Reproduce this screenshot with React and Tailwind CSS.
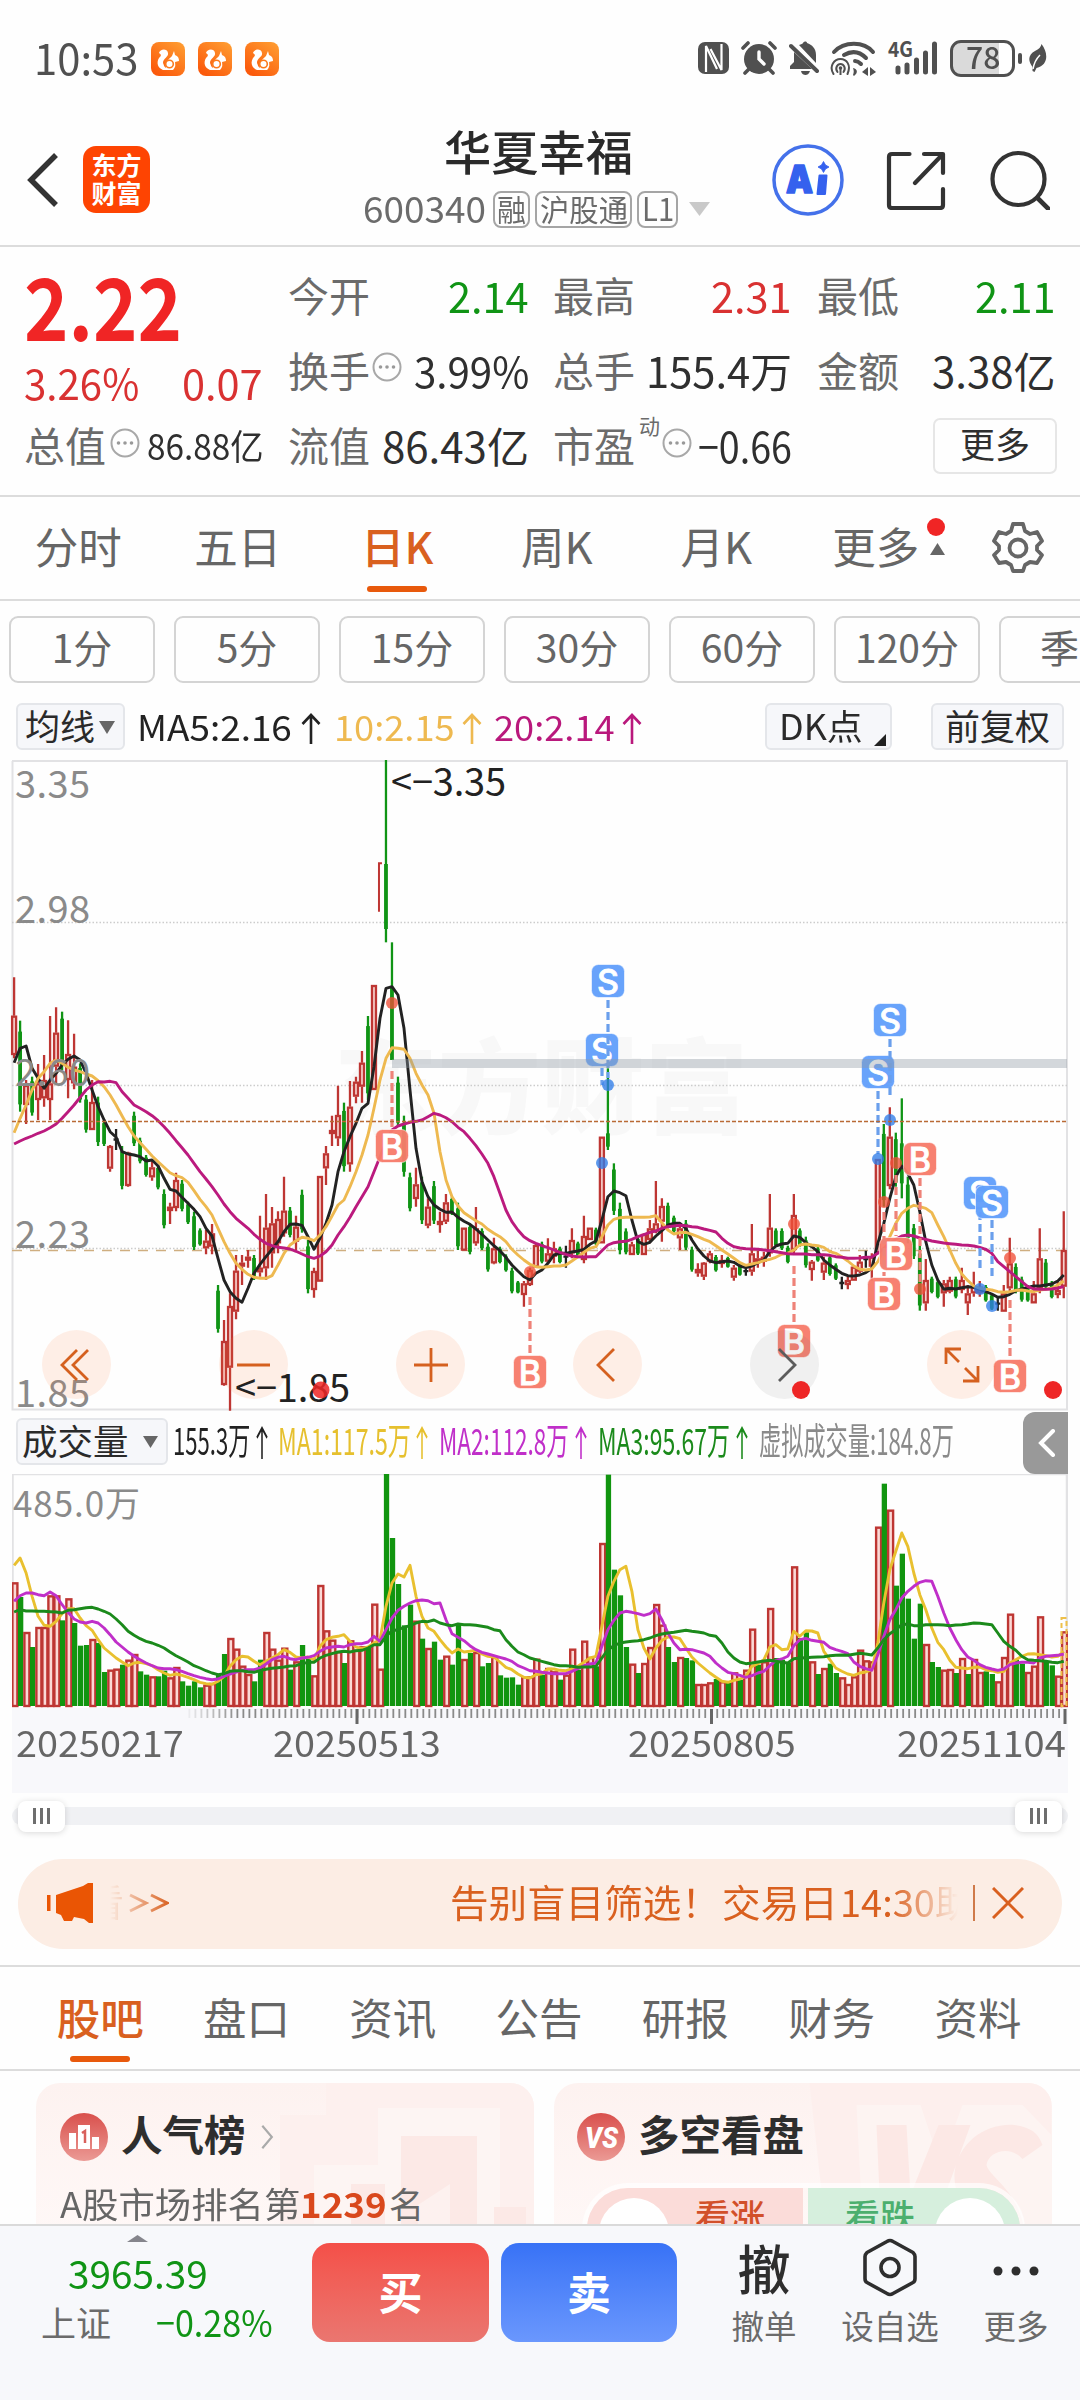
import React, { useLayoutEffect, useRef } from "react";

/* ---------- shared pieces ---------- */

// Text squeezed or stretched horizontally to fill the width set by its class.
function Fit({ className = "", children }) {
  const outer = useRef(null);
  const inner = useRef(null);
  useLayoutEffect(() => {
    inner.current.style.transform = `scaleX(${outer.current.offsetWidth / inner.current.offsetWidth})`;
  }, []);
  return (
    <span ref={outer} className={"inline-block shrink-0 whitespace-nowrap leading-none " + className}>
      <span ref={inner} className="inline-block origin-left">{children}</span>
    </span>
  );
}

const Up = ({ className = "" }) => (
  <svg viewBox="0 0 20 32" preserveAspectRatio="none" className={"shrink-0 " + className} fill="none" stroke="currentColor" strokeWidth="2.6">
    <path d="M10 31V2M1.5 11L10 2l8.5 9" />
  </svg>
);

const Down = ({ className = "" }) => (
  <svg viewBox="0 0 20 14" preserveAspectRatio="none" className={"shrink-0 " + className} fill="currentColor"><path d="M0 0h20L10 14z" /></svg>
);

const Dots = ({ className = "" }) => (
  <svg viewBox="0 0 30 30" className={"h-[30px] w-[30px] shrink-0 " + className}>
    <circle cx="15" cy="15" r="13.5" fill="none" stroke="#a8a8a8" strokeWidth="2" />
    <circle cx="8.5" cy="15" r="1.8" fill="#999" /><circle cx="15" cy="15" r="1.8" fill="#999" /><circle cx="21.5" cy="15" r="1.8" fill="#999" />
  </svg>
);

/* ---------- status bar ---------- */

const Squirrel = () => (
  <svg viewBox="0 0 34 34" className="h-[34px] w-[34px]">
    <defs><linearGradient id="sq" x1="1" y1="0" x2="0.3" y2="1"><stop offset="0" stopColor="#ffa033" /><stop offset="1" stopColor="#fb5a0c" /></linearGradient></defs>
    <rect width="34" height="34" rx="8" fill="url(#sq)" />
    <path d="M8 11c1-4 8-5 9 0 1 4-5 5-5 10 1 2 1 4 3 5-1-6 3-9 6-12l2-5 1 4c3 1 4 3 4 6l-4 1c1 3 0 6-2 8H12c-5-2-7-7-4-12 2-2 3-3 0-5z" fill="#fff" />
    <circle cx="18.500" cy="22" r="3.800" fill="#fff" stroke="#fb7a1c" strokeWidth="1.600" />
    <path d="M24.500 22h3M24.500 26h2" stroke="#fb7a1c" strokeWidth="1.500" />
  </svg>
);

function StatusBar() {
  return (
    <div className="flex h-[118px] items-center pl-[34px] text-[#505050]">
      <Fit className="w-[104px] text-[43px] -mt-[5px]">10:53</Fit>
      <div className="ml-[13px] flex gap-[13px]"><Squirrel /><Squirrel /><Squirrel /></div>
      <div className="ml-[419px] flex items-center -mt-[2px]">
        <svg viewBox="0 0 31 32" className="h-[32px] w-[31px]">
          <rect width="31" height="32" rx="7" fill="#505050" />
          <path d="M8 30V4l11 23M23.500 2v26L12.500 7" fill="none" stroke="#fff" strokeWidth="2.200" strokeLinejoin="bevel" />
        </svg>
        <svg viewBox="0 0 36 34" className="ml-[12px] h-[34px] w-[36px]" fill="none" stroke="#505050" strokeWidth="3.600" strokeLinecap="round">
          <circle cx="18" cy="18" r="15" fill="#505050" stroke="none" />
          <path d="M2 7l5-5M34 7l-5-5M8 28l-4 4M28 28l4 4" />
          <path d="M18 11v7l5 5" stroke="#fff" strokeWidth="3.400" />
        </svg>
        <svg viewBox="0 0 30 34" className="ml-[12px] h-[34px] w-[30px]" fill="#505050">
          <path d="M10 4c2-1 4-1 4-2 1-2 4-2 4 0 5 2 9 5 9 12v8zM5 11l18 17H1v-3l4-4zM12 30h9c-1 3-3 4-4.500 4s-4-1-4.500-4z" />
          <path d="M2 5l26 25" strokeWidth="4" stroke="#505050" strokeLinecap="round" />
        </svg>
        <svg viewBox="0 0 46 35" className="ml-[11px] h-[35px] w-[46px]" fill="none" stroke="#505050" strokeWidth="4" strokeLinecap="round">
          <path d="M4 11C14 0 34 0 43 11" /><path d="M14 14c7-4 15-4 22 3" /><path d="M25 20c3 0 4 1 6 3" />
          <path d="M3.500 33c-5-8 1-15 7-15s11 6 7 15" strokeWidth="2" /><path d="M7.500 31c-3-4 0-8 3-8s6 4 3 8" strokeWidth="2" />
          <circle cx="10.500" cy="27" r="1.800" fill="#505050" stroke="none" /><path d="M9.500 28h2v6h-2z" fill="#505050" stroke="none" />
          <path d="M23 27c5 1 5 5 1 8l-1-1c1-3 1-4 0-7zM32 31l6-5v9zM40 26v9l6-4z" fill="#505050" stroke="none" />
        </svg>
        <svg viewBox="0 0 52 36" className="ml-[11px] h-[36px] w-[52px]" fill="none" stroke="#505050" strokeWidth="5" strokeLinecap="round">
          <text x="1" y="17" fontSize="21" fontWeight="700" fill="#505050" stroke="none" textLength="25" lengthAdjust="spacingAndGlyphs">4G</text>
          <path d="M11 28v4M20 25v7M29.500 20v12M38.500 13v19M47.500 4v28" />
        </svg>
        <div className="ml-[11px] flex h-[37px] w-[65px] items-center justify-center rounded-[11px] border-[3px] border-[#505050] bg-[linear-gradient(90deg,#dadada_78%,#fff_78%)]">
          <Fit className="w-[34px] text-[31px] font-medium -mt-[5px]">78</Fit>
        </div>
        <div className="ml-[3px] h-[11px] w-[4px] rounded bg-[#505050]" />
        <svg viewBox="0 0 18 28" className="ml-[7px] h-[28px] w-[18px]" fill="#505050"><path d="M12.500 0c7 9 7 21-5 24l-2 4-2-1v-4C-2 16 0 10 6 7c4-2 6-4 6.500-7z" /><path d="M4 25C5 19 7 15 11 11" stroke="#fff" strokeWidth="1.500" fill="none" /></svg>
      </div>
    </div>
  );
}

/* ---------- header ---------- */

function Header() {
  return (
    <header className="flex h-[129px] items-center border-b-2 border-[#dcdcdc] pb-[4px] text-[#333]">
      <svg viewBox="0 0 32 54" className="ml-[27px] h-[54px] w-[32px]" fill="none" stroke="#333" strokeWidth="5.500"><path d="M29 2L4 27l25 25" /></svg>
      <div className="ml-[24px] flex h-[67px] w-[67px] flex-col items-center justify-center gap-[3px] rounded-[13px] bg-[#fe4402] pb-[3px] text-[25px] font-bold leading-none text-white">
        <span>东方</span><span>财富</span>
      </div>
      <div className="ml-[212px] flex w-[350px] flex-col">
        <div className="-mt-[6px] pl-[82px]"><Fit className="w-[189px] text-[47px] font-medium text-[#2a2a2a]">华夏幸福</Fit></div>
        <div className="mt-[16px] flex items-center text-[#6b6b6b]">
          <Fit className="w-[123px] text-[36px] ml-[1px] -mt-[5px]">600340</Fit>
          <span className="ml-[7px] flex h-[37px] w-[37px] items-center justify-center rounded-[8px] border-2 border-[#a5a5a5]"><Fit className="w-[29px] text-[30px] -mt-[3px]">融</Fit></span>
          <span className="ml-[5px] flex h-[37px] w-[97px] items-center justify-center rounded-[8px] border-2 border-[#a5a5a5]"><Fit className="w-[88px] text-[30px] -mt-[3px]">沪股通</Fit></span>
          <span className="ml-[5px] flex h-[37px] w-[41px] items-center justify-center rounded-[8px] border-2 border-[#a5a5a5]"><Fit className="w-[32px] text-[32px] -mt-[4px]">L1</Fit></span>
          <Down className="ml-[11px] h-[14px] w-[21px] text-[#c9c9c9]" />
        </div>
      </div>
      <svg viewBox="0 0 72 72" className="ml-[60px] h-[72px] w-[72px]">
        <circle cx="36" cy="36" r="34" fill="#fff" stroke="#4471ea" strokeWidth="3.500" />
        <g fill="#3561ee" stroke="#3561ee" strokeLinejoin="round">
          <text x="14" y="49" fontFamily="Inter, sans-serif" fontWeight="900" fontSize="38" strokeWidth="1.600" textLength="27" lengthAdjust="spacingAndGlyphs">A</text>
          <path d="M47.500 31.500h7l-1.500 18.500h-7.500z" strokeWidth="2" />
          <path d="M51.500 17.500l2 3.500 3.500 2-3.500 2-2 3.500-2-3.500-3.500-2 3.500-2z" strokeWidth="0.800" />
        </g>
      </svg>
      <svg viewBox="0 0 60 60" className="ml-[42px] h-[60px] w-[60px]" fill="none" stroke="#333" strokeWidth="4.200" strokeLinecap="round" strokeLinejoin="round">
        <path d="M23.500 4H6c-2 0-3 1-3 3v48c0 2 1 3 3 3h48c2 0 3-1 3-3V39M38 4h19v19M56 5L29 33" />
      </svg>
      <svg viewBox="0 0 60 60" className="ml-[44px] h-[60px] w-[60px]" fill="none" stroke="#333" strokeWidth="4.200" strokeLinecap="round"><circle cx="28.500" cy="29" r="26" /><path d="M47.500 48L58 58.500" strokeWidth="4.600" /></svg>
    </header>
  );
}

/* ---------- quote ---------- */

const Label = ({ children }) => <span className="text-[41px] text-[#6b6b6b]">{children}</span>;

function Quote() {
  const cell = "flex h-[75px] items-center justify-between leading-none";
  return (
    <section className="flex h-[250px] border-b-2 border-[#dcdcdc] pt-[10px] text-[42px] leading-none text-[#2f2f2f]">
      <div className="ml-[24px] w-[239px]">
        <div className="h-[92px] pt-[4px]"><Fit className="w-[158px] text-[86px] font-bold text-[#f02525]">2.22</Fit></div>
        <div className="flex h-[58px] items-center justify-between pt-[8px] text-[#d93131]">
          <Fit className="w-[115px]">3.26%</Fit><Fit className="w-[81px]">0.07</Fit>
        </div>
        <div className={cell}><Label>总值</Label><Dots className="-ml-[3px] -mt-[4px]" /><Fit className="w-[116px] text-[35px]">86.88亿</Fit></div>
      </div>
      <div className="ml-[25px] w-[241px]">
        <div className={cell}><Label>今开</Label><Fit className="w-[81px] text-[#109415]">2.14</Fit></div>
        <div className={cell}><Label>换手</Label><Dots className="-ml-[10px] -mt-[6px]" /><Fit className="w-[115px]">3.99%</Fit></div>
        <div className={cell}><Label>流值</Label><Fit className="w-[147px]">86.43亿</Fit></div>
      </div>
      <div className="ml-[24px] w-[239px]">
        <div className={cell}><Label>最高</Label><Fit className="w-[81px] text-[#d93131]">2.31</Fit></div>
        <div className={cell}><Label>总手</Label><Fit className="w-[146px]">155.4万</Fit></div>
        <div className={cell}>
          <Label>市盈</Label><span className="mb-[38px] -ml-[2px] text-[21px] text-[#6b6b6b]">动</span><Dots className="-ml-[4px] -mt-[4px]" />
          <Fit className="w-[94px]">−0.66</Fit>
        </div>
      </div>
      <div className="ml-[25px] w-[239px]">
        <div className={cell}><Label>最低</Label><Fit className="w-[81px] text-[#109415]">2.11</Fit></div>
        <div className={cell}><Label>金额</Label><Fit className="w-[124px]">3.38亿</Fit></div>
        <div className={cell + " !justify-end"}>
          <div className="-mr-[1px] mt-[2px] flex h-[56px] w-[124px] items-center justify-center rounded-[7px] border-2 border-[#e6e6e6] pb-[6px] text-[35px]">更多</div>
        </div>
      </div>
    </section>
  );
}

/* ---------- period tabs ---------- */

function Periods() {
  const tabs = ["分时", "五日", "日K", "周K", "月K", "更多"];
  return (
    <nav className="flex h-[104px] border-b-2 border-[#dcdcdc] text-[43.500px] leading-none text-[#666]">
      {tabs.map((t) => (
        <div key={t} className={"relative flex w-[159.500px] items-center justify-center pb-[5px] pr-[3px] " + (t === "日K" ? "font-medium text-[#d9601f]" : "")}>
          <span>{t}</span>
          {t === "日K" && <i className="absolute bottom-[7px] h-[6px] w-[60px] rounded-full bg-[#e8590c]" />}
          {t === "更多" && (
            <>
              <i className="absolute left-[129px] top-[21px] h-[18px] w-[18px] rounded-full bg-[#f02525]" />
              <Down className="absolute left-[132px] top-[46px] h-[12px] w-[15px] rotate-180 text-[#666]" />
            </>
          )}
        </div>
      ))}
      <svg viewBox="0 0 52 54" className="ml-[34px] mt-[24px] h-[54px] w-[54px]" fill="none" stroke="#666" strokeWidth="3.800" strokeLinejoin="round">
        <path d="M21 3h10l2 7 5 3 7-2 5 9-5 5v4l5 5-5 8-7-1-5 3-2 6H21l-2-6-5-3-7 1-5-8 5-5v-4l-5-5 5-9 7 2 5-3z" />
        <circle cx="26" cy="27" r="8.500" />
      </svg>
    </nav>
  );
}

function Chips() {
  return (
    <div className="flex h-[98px] gap-[19px] overflow-hidden pl-[9px] pt-[15px]">
      {["1分", "5分", "15分", "30分", "60分", "120分", "季K"].map((t) => (
        <div key={t} className="flex h-[67px] w-[146px] shrink-0 items-center justify-center rounded-[9px] border-2 border-[#d4d4d4] pb-[6px] text-[39px] leading-none text-[#666]">{t}</div>
      ))}
    </div>
  );
}

function MaRow() {
  const btn = "flex h-[47px] items-center rounded-[6px] border-2 border-[#e4e6ea] bg-[#f6f7fa] pb-[5px] text-[35px] leading-none text-[#2a2a2a]";
  return (
    <div className="flex h-[61px] items-start pt-[4px]">
      <div className={btn + " ml-[16px] w-[109px] pl-[7px]"}>均线<Down className="ml-[4px] mt-[6px] h-[13px] w-[16px] text-[#666]" /></div>
      <div className="flex h-[45px] items-center text-[35px] text-[#222]">
        <Fit className="ml-[12px] w-[155px]">MA5:2.16</Fit><Up className="ml-[9px] mt-[6px] h-[32px] w-[20px]" />
        <Fit className="ml-[13px] w-[121px] text-[#eeb950]">10:2.15</Fit><Up className="ml-[7px] mt-[6px] h-[32px] w-[20px] text-[#eeb950]" />
        <Fit className="ml-[12px] w-[121px] text-[#b9187c]">20:2.14</Fit><Up className="ml-[7px] mt-[6px] h-[32px] w-[20px] text-[#b9187c]" />
      </div>
      <div className={btn + " ml-[123px] w-[127px] pl-[12px]"}>
        <Fit className="w-[84px]">DK点</Fit>
        <svg viewBox="0 0 12 12" className="ml-[11px] mt-[32px] h-[12px] w-[12px]"><path d="M12 0v12H0z" fill="#222" /></svg>
      </div>
      <div className={btn + " ml-[39px] w-[133px] justify-center"}>前复权</div>
    </div>
  );
}

/* ---------- chart data ---------- */

// One token per trading day: colour, then high/bodyTop/bodyBottom/low, or just top/bottom.
const CANDLES = `r-308/-193/-75/-65 g-178/95 r0/15/75/132 g-10/107 r-48/10/60/120 r-75/0/55/80 r-192/10/60/120 r-218/-142/-40/10 g-205/-30 r-179/-78/0/55 r-139/-40/10/28 g-50/68 g45/158 r0/66/150/150
g50/198 g120/198 r195/198/266/275 k147/210 g198/328 r215/218/318/320 g95/198 g173/250 g225/290 r240/262/292/302 g255/328 g328/445 r368/380/393/432 r278/300/384/394 g300/394 g365/432
g395/510 g445/497 r450/482/505/523 r432/460/500/523 g615/758 r720/783/915/917 r640/678/863/992 r525/572/695/718 r525/548/560/615 r510/530/535/563 g525/600 r407/563/577/590 r342/443/565/600 r381/430/520/563 r394/417/490/520 r290/392/460/470
g381/472 r407/440/485/510 g329/458 g480/640 r563/573/630/653 r288/288/605/605 r198/220/265/315 r107/150/155/198 r17/105/175/198 g68/275 r3/80/253/275 r-10/5/50/70 r-87/-52/20/68 g-192/60 r-285/-285/30/30 t-650/-505 G-960/-648/-453/-413 G-413/-278/-60/-60
g-10/140 g107/290 g278/394 r263/313/357/380 g290/432 r355/380/437/445 g303/432 r395/423/435/458 r342/367/425/432 g350/405 g368/510 r443/443/512/512 g430/523 r381/445/490/497 g445/510 g490/575 r473/505/550/553 g500/550 g523/575 g563/640 g603/640 r603/610/645/680 r563/570/615/618 r490/495/562/562
g485/550 r475/520/545/550 r485/505/530/550 g500/550 k497/563 r445/480/520/535 g485/530 r407/468/540/550 r443/443/480/480 g443/495 r170/170/490/490 G-35/160/200/210 g250/405 g368/523 g445/523 r485/493/525/525 g470/525 r460/462/525/525 r420/445/480/490 r303/430/455/460 r355/378/425/485 g368/445 g407/458 r430/445/475/510 g420/510 g500/575 r550/567/580/590 r546/548/590/600
r512/520/545/550 g525/575 r525/540/550/563 g530/563 r555/563/593/602 g550/587 k560/587 r432/520/575/587 r512/535/545/563 r515/530/545/560 r342/443/520/530 g445/500 g445/510 g497/550 r342/405/510/525 g445/500 g470/563 r540/545/570/602 g500/545 r530/548/578/600 g525/587 g550/600 k590/628 r590/600/615/628 r558/560/602/602 r525/545/575/580 k512/563 r520/530/560/602
r237/237/520/520 g132/380 r82/170/318/328 g158/320 G55/190/310/355 g290/490 g432/537 g497/692 r537/600/670/692 g590/640 g600/655 r600/610/640/680 r590/600/635/640 g590/655 r563/600/630/640 r615/640/670/705 r575/620/640/650 r603/620/640/650 g615/665 g640/690 k650/692 r615/640/695/695 r473/550/625/640 g550/640 g590/665 g615/665 r603/640/670/670 r445/535/625/640 g537/628 g603/655 r603/630/645/655 r394/510/620/655`
  .trim().split(/\s+/).map((t) => {
    const v = t.slice(1).split("/").map(Number);
    const [h, a, b, l] = v.length === 2 ? [v[0], v[0], v[1], v[1]] : v;
    return { c: t[0], h, a, b, l };
  });

const MA5 = [-52,-95,-102,-35,-5,25,0,-20,-45,-62,-72,-60,-20,30,80,120,155,172,215,222,225,230,243,240,258,295,328,333,352,370,388,410,445,468,535,600,635,655,667,625,580,553,530,508,485,455,433,432,436,470,508,475,430,375,275,215,170,130,85,70,-40,-185,-275,-280,-255,-155,30,205,305,350,375,388,397,396,412,424,433,447,463,480,497,512,532,555,573,590,599,580,570,550,525,520,520,516,513,508,493,483,420,350,333,338,347,420,485,493,487,468,452,435,430,430,445,480,507,528,543,548,545,543,547,558,563,558,548,540,515,498,492,490,468,472,488,500,515,540,555,568,580,587,588,585,578,565,490,430,355,290,258,280,315,395,485,555,600,628,625,627,623,620,622,628,635,642,652,650,643,632,627,622,618,618,615,612,603,585];
const MA10 = [158,115,75,30,-5,-25,-50,-60,-50,-38,-30,-25,-18,-12,2,20,45,75,108,140,168,188,208,228,245,262,278,287,293,307,332,358,380,405,445,485,520,550,568,583,592,595,595,587,555,520,495,482,472,475,482,465,440,408,375,360,320,275,225,165,85,0,-65,-97,-95,-92,-65,-20,15,45,100,215,300,350,378,398,410,422,432,448,460,470,485,508,525,540,553,560,562,560,558,558,555,543,530,517,505,500,470,435,418,413,412,412,412,412,411,407,428,450,462,458,457,463,470,478,485,497,510,522,535,548,556,552,548,542,538,532,523,520,510,495,492,495,497,502,515,520,530,543,558,568,570,567,545,510,470,430,400,385,376,380,385,398,435,470,510,550,582,602,618,625,628,630,635,637,635,631,630,633,635,630,628,625,615,603];
const MA20 = [192,183,175,168,160,153,143,132,115,95,75,52,30,15,5,6,4,8,35,55,75,85,95,107,122,140,160,182,203,225,250,275,297,320,345,372,395,415,430,445,463,478,490,497,502,504,507,514,522,530,535,528,515,495,465,440,412,380,350,320,275,230,185,150,138,132,127,124,120,110,100,105,113,125,142,155,175,197,222,250,290,340,390,425,450,470,482,490,497,503,510,517,523,528,530,531,530,530,512,495,488,485,484,478,470,464,457,453,445,440,438,436,437,440,442,447,451,456,475,490,500,504,506,507,508,510,512,515,518,521,522,522,522,524,524,524,526,530,532,535,535,534,532,531,520,505,490,478,468,465,468,474,478,483,486,489,491,493,495,496,498,502,508,520,545,560,575,590,605,620,627,628,628,627,624,620];

const VOLUMES = `r518 g562 r667 g712 r652 r652 r557 r557 g632 r566 g640 g708 g706 r688 g700 g787 r780 r777 g765 r750 r733 g785 g795 r800 g800 g783 r803 r772 g815 g828 g815 g833 r825 r820 g795 g733 r685 r717 r768 r793 g815 g750 r667 r717 r750 r714 g780 r755 g706 g748 r797 r526 r662 r690 r725 g760 r692 r720 r710 g712 r582 r777 g193 g385 g523 g647 g585 r633 g687 r715 g696 g750 r738 g765 g640 r748 g730 r727 g770 g760 r740 g797 g804 g803 g825 r800 r800 r747
g795 r775 r785 g810 r795 r717 g780 r693 r742 g770 r400 g195 g480 g557 g712 r762 g790 r760 r712 r583 r645 g712 g757 r742 g745 g752 r823 r823 r818 g808 r815 g818 r788 g810 r780 r657 g765 r755 r595 g745 g750 g760 r470 g685 g668 r755 g793 r775 g762 g790 r803 r823 r800 r720 r752 r755 r351 g222 r300 g528 g432 g567 g687 g582 r703 g757 g772 r780 r778 g790 r745 g793 r748 r787 g785 g793 r815 r742 r612 g750 g762 r787 r768 r620 g755 g767 r798 r665`
  .trim().split(/\s+/).map((t) => ({ c: t[0], y: Number(t.slice(1)) }));

const VM1 = [467,445,490,560,620,647,650,635,612,597,597,625,648,662,690,715,730,745,757,768,760,758,762,768,780,790,797,793,797,803,810,818,822,824,815,800,770,750,740,742,755,765,755,745,735,720,728,742,745,742,750,710,690,683,680,675,695,712,717,712,700,690,590,520,493,502,467,560,620,655,665,690,712,730,718,727,725,722,733,740,742,757,773,780,793,803,805,795,792,778,778,782,783,778,770,758,745,740,650,560,515,480,470,545,660,715,748,715,692,682,682,687,715,742,760,775,790,803,815,818,812,808,800,770,762,750,712,705,720,718,665,680,663,664,670,725,750,775,785,793,797,790,787,780,700,580,480,425,370,410,490,555,600,655,698,720,752,773,775,777,773,772,780,783,788,785,760,750,740,733,732,735,738,742,740,725];
const VM2 = [575,558,550,550,555,558,547,558,585,608,628,637,640,635,640,655,675,697,712,727,740,750,760,768,775,777,777,780,785,792,798,803,807,810,808,800,793,787,782,780,780,775,763,750,743,740,747,750,745,743,738,725,715,712,710,712,705,702,702,697,680,695,660,625,602,590,580,573,571,573,582,580,630,672,683,693,708,720,728,733,738,743,748,755,768,775,783,785,788,790,792,792,792,785,777,768,763,760,710,660,632,610,605,608,612,617,612,598,630,670,700,720,719,720,725,730,740,760,775,788,792,797,803,798,790,785,768,752,748,740,708,690,686,692,695,698,713,720,725,732,757,770,777,782,735,680,630,600,565,545,530,518,513,515,560,610,655,690,720,742,752,765,773,778,782,778,765,760,758,758,760,745,740,738,737,733];
const VM3 = [607,600,604,604,605,605,606,607,610,602,600,597,594,593,598,605,613,628,645,665,677,687,695,700,707,715,727,738,747,757,768,775,783,790,795,792,785,783,783,786,788,783,779,776,774,772,769,768,762,758,758,745,737,732,727,725,727,723,722,715,705,705,680,663,660,653,648,640,635,636,631,640,645,648,643,645,645,647,650,653,660,663,690,710,727,735,745,750,755,760,765,768,768,770,773,772,772,770,745,720,708,700,697,695,693,690,685,678,673,670,668,665,662,665,667,670,677,680,700,727,745,757,762,760,757,754,752,755,758,760,747,745,744,743,742,741,738,737,736,737,734,731,733,736,715,690,672,660,645,643,648,648,645,645,645,646,648,646,645,643,640,641,643,645,670,695,710,722,740,750,752,753,755,758,759,755];

const RED = "#be3633";
const GREEN = "#109415";
const X = (k) => 2.1 + 5.998 * k;
const PY = (v) => 320 + v / 3;
const VY = (v) => (v - 193) / 3;
const line = (arr, f) => arr.map((v, k) => `${X(k).toFixed(1)},${f(v).toFixed(1)}`).join(" ");

// kind, badge centre, dot y, dashed line from/to
const MARKS = [
  ["B", 380, 386, 243, 311, 370], ["B", 518, 612, 512, 537, 594],
  ["S", 590, 290, 403, 308, 325], ["S", 596, 221, 325, 240, 318],
  ["B", 782, 581, 464, 506, 563], ["S", 866, 312, 399, 331, 394], ["S", 878, 260, 360, 279, 336],
  ["B", 884, 494, 403, 415, 476], ["B", 872, 534, 442, 452, 516], ["B", 908, 399, 529, 418, 522],
  ["S", 968, 433, 529, 452, 509], ["S", 980, 442, 546, 460, 518], ["B", 998, 616, 498, 540, 598],
];

function Candle({ d, x }) {
  if (d.c === "t") return <path d={`M${x + 2} ${PY(d.a)}H${x - 1}V${PY(d.b)}`} fill="none" stroke={RED} strokeWidth="2" />;
  if (d.c === "r") {
    return (
      <g stroke={RED} strokeWidth="2.300">
        <path d={`M${x} ${PY(d.h)}V${PY(d.a)}M${x} ${PY(d.b)}V${PY(d.l)}`} />
        <rect x={x - 2} y={PY(d.a) + 1} width="4" height={Math.max(2, (d.b - d.a) / 3 - 2)} fill="#f6cfcb" />
      </g>
    );
  }
  if (d.c === "k") return <path d={`M${x} ${PY(d.h)}V${PY(d.l)}M${x - 2.5} ${PY((d.h + d.l) / 2)}h5`} stroke="#222" strokeWidth="2.300" />;
  const top = d.c === "G" ? d.a : d.h + (d.l - d.h) * 0.12;
  const bottom = d.c === "G" ? d.b : d.l - (d.l - d.h) * 0.08;
  return (
    <g stroke={GREEN}>
      <path d={`M${x} ${PY(d.h)}V${PY(d.l)}`} strokeWidth="2.300" />
      <path d={`M${x} ${PY(top)}V${PY(bottom)}`} strokeWidth="3.800" />
    </g>
  );
}

function PriceChart() {
  return (
    <div className="relative ml-[12px] h-[651px] w-[1056px]">
      <svg viewBox="0 0 1056 651" className="block h-[651px] w-[1056px] overflow-visible">
        <text x="322" y="366" fontSize="103" fontWeight="900" fill="#f8f8f8" textLength="414">东方财富</text>
        <path d="M0 1H1055V649.500H0.500V1" fill="none" stroke="#e2e2e4" strokeWidth="2" />
        {[162.5, 325.5, 488.5].map((y) => <path key={y} d={`M0 ${y}H1055`} stroke="#ccc" strokeWidth="1.300" strokeDasharray="1.500 2" />)}
        <path d="M0 490.500H1055" stroke="#cfae80" strokeWidth="1.500" strokeDasharray="10 8" />
        {CANDLES.map((d, k) => <Candle key={k} d={d} x={X(k)} />)}
        <g fill="none" strokeWidth="2.900" strokeLinejoin="round">
          <polyline points={line(MA5, PY)} stroke="#222" />
          <polyline points={line(MA10, PY)} stroke="#eeb950" />
          <polyline points={line(MA20, PY)} stroke="#bb1a7e" />
        </g>
        <g fontSize="38" fill="#8a8a8a">
          <text x="3" y="38" textLength="75">3.35</text><text x="3" y="163" textLength="75">2.98</text>
          <text x="3" y="326" textLength="75">2.60</text><text x="3" y="488" textLength="75">2.23</text><text x="3" y="647" textLength="75">1.85</text>
        </g>
        {MARKS.map(([t, x, y, dot, a, b], i) => (
          <g key={i}>
            <path d={`M${x} ${a}V${b}`} stroke={t === "S" ? "#6a9fec" : "#ee8278"} strokeWidth="3.200" strokeDasharray="8 4" />
            <circle cx={x} cy={dot} r="6" fill={t === "S" ? "#2f7ce8" : "#ef5038"} fillOpacity="0.780" />
            <rect x={x - 16.5} y={y - 16.5} width="33" height="33" rx="7" fill={t === "S" ? "#629ffb" : "#f77c6b"} fillOpacity="0.960" stroke="#fff" strokeOpacity="0.600" strokeWidth="1" />
            <text x={x} y={y + 12.5} textAnchor="middle" fontFamily="Inter, sans-serif" fontSize="34" fontWeight="500" fill="#fff" stroke="#fff" strokeWidth="0.800">{t}</text>
          </g>
        ))}
        <rect x="380" y="299" width="675" height="9" fill="#8e98a3" fillOpacity="0.380" />
        <path d="M0 361.500H1055" stroke="#b96a35" strokeWidth="1.600" strokeDasharray="4 2" />
        <text x="379" y="36" fontSize="38" fill="#222" textLength="115">&lt;−3.35</text>
      </svg>
      <div className="absolute bottom-[12px] left-[30px] flex gap-[108px]">
        {["dbl", "minus", "plus", "left", "right", "full"].map((n) => (
          <div key={n} className={"flex h-[69px] w-[69px] items-center justify-center rounded-full " + (n === "right" ? "bg-[#777]/10" : "bg-[#ff7a3a]/12")}>
            <svg viewBox="-18 -18 36 36" className="h-[36px] w-[36px] overflow-visible" fill="none" stroke={n === "right" ? "#5c5c5c" : "#d5601f"} strokeWidth="2.800">
              {n === "dbl" && <path d="M0-15L-15 0 0 15M11-15L-4 0 11 15" />}
              {n === "minus" && <path d="M-17 0H16" />}
              {n === "plus" && <path d="M-17 0H17M0-17V17" />}
              {n === "left" && <path d="M6-16L-10 0 6 16" />}
              {n === "right" && <path d="M-6-16L10 0-6 16" />}
              {n === "full" && <path d="M-3-3L-15-15M-16-1V-16H-1M3 3L15 15M16 1V16H1" />}
            </svg>
          </div>
        ))}
      </div>
      <svg viewBox="0 0 1056 651" className="pointer-events-none absolute inset-0 h-[651px] w-[1056px]">
        <text x="223" y="642" fontSize="38" fill="#222" textLength="115">&lt;−1.85</text>
        <g fill="#ee2626"><circle cx="309" cy="630" r="8.500" fillOpacity="0.850" /><circle cx="789" cy="630" r="9" /><circle cx="1041" cy="630" r="9" /></g>
      </svg>
    </div>
  );
}

function VolumeRow() {
  return (
    <div className="ml-[16px] flex h-[63px] items-center text-[37px]">
      <div className="-mt-[2px] flex h-[47px] w-[152px] items-center rounded-[6px] border-2 border-[#e4e6ea] bg-[#f6f7fa] pb-[4px] text-[35.500px] leading-none text-[#2a2a2a]">
        <span className="ml-[4px]">成交量</span><Down className="ml-[14px] mt-[4px] h-[12px] w-[15px] text-[#666]" />
      </div>
      <div className="-mt-[7px] flex items-center text-[#222]">
        <Fit className="ml-[5px] w-[77px]">155.3万</Fit><Up className="ml-[6px] mt-[7px] h-[34px] w-[12px]" />
        <Fit className="ml-[10px] w-[133px] text-[#e6c02e]">MA1:117.5万</Fit><Up className="ml-[5px] mt-[7px] h-[34px] w-[12px] text-[#e6c02e]" />
        <Fit className="ml-[11px] w-[130px] text-[#c02fc9]">MA2:112.8万</Fit><Up className="ml-[6px] mt-[7px] h-[34px] w-[12px] text-[#c02fc9]" />
        <Fit className="ml-[11px] w-[132px] text-[#1b8a1b]">MA3:95.67万</Fit><Up className="ml-[6px] mt-[7px] h-[34px] w-[12px] text-[#1b8a1b]" />
        <Fit className="ml-[11px] w-[195px] text-[#8a8a8a]">虚拟成交量:184.8万</Fit>
      </div>
      <div className="ml-auto mr-[12px] flex h-[62px] w-[45px] items-center justify-center rounded-l-[12px] bg-[#999]">
        <svg viewBox="0 0 18 28" className="ml-[3px] h-[28px] w-[18px]" fill="none" stroke="#fff" strokeWidth="4" strokeLinecap="round"><path d="M15 2L3 14l12 12" /></svg>
      </div>
    </div>
  );
}

function VolumeChart() {
  return (
    <div className="ml-[12px] w-[1056px]">
      <svg viewBox="0 0 1056 234" className="block h-[234px] w-[1056px]">
        <path d="M0 0H1055V233M0.500 0V233" fill="none" stroke="#e2e2e4" strokeWidth="2.500" />
        <text x="1" y="43" fontSize="35" fill="#8a8a8a" textLength="127">485.0万</text>
        {VOLUMES.map((d, k) =>
          d.c === "r" ? (
            <rect key={k} x={X(k) - 1.700} y={VY(d.y) + 1} width="5" height={231 - VY(d.y)} fill="#fbd9d6" stroke={RED} strokeWidth="2.400" />
          ) : (
            <rect key={k} x={X(k) - 2.100} y={VY(d.y)} width="5.300" height={232 - VY(d.y)} fill="#11950f" />
          )
        )}
        <rect x="1049.500" y="144" width="5" height="88" fill="none" stroke="#eec04a" strokeWidth="2" strokeDasharray="5 3" />
        <g fill="none" strokeWidth="2.900" strokeLinejoin="round">
          <polyline points={line(VM1, VY)} stroke="#e9c02f" />
          <polyline points={line(VM2, VY)} stroke="#c02fc9" />
          <polyline points={line(VM3, VY)} stroke="#1b8a1b" />
        </g>
      </svg>
      <div className="h-[85px] bg-[#f8f8fb]">
        <svg viewBox="0 0 1056 16" className="block h-[16px] w-[1056px]">
          {Array.from({ length: 147 }, (_, i) => i).map((i) => <rect key={i} x={176.500 + i * 5.998} y="1" width="1.800" height="9" fill="#8a8a8a" opacity={Math.min(1, (i + 1) / 9)} />)}
          <g fill="#666"><rect x="343.500" y="1" width="3" height="15" /><rect x="698" y="1" width="3" height="15" /><rect x="1051.500" y="1" width="3" height="15" /></g>
        </svg>
        <div className="flex text-[36px] text-[#666] -mt-[1px]">
          <Fit className="ml-[4px] w-[168px]">20250217</Fit>
          <Fit className="ml-[89px] w-[168px]">20250513</Fit>
          <Fit className="ml-[187px] w-[168px]">20250805</Fit>
          <Fit className="ml-[101px] w-[169px]">20251104</Fit>
        </div>
      </div>
      <div className="mt-[14px] flex h-[18px] items-center justify-between rounded-full bg-[#f0f1f4] pl-[6px] pr-[6px]">
        {[0, 1].map((i) => (
          <div key={i} className="flex h-[31px] w-[47px] items-center justify-center gap-[4px] rounded-[8px] bg-white shadow-[0_1px_6px_rgba(0,0,0,0.15)]">
            <i className="h-[16px] w-[3px] bg-[#6e6e6e]" /><i className="h-[16px] w-[3px] bg-[#6e6e6e]" /><i className="h-[16px] w-[3px] bg-[#6e6e6e]" />
          </div>
        ))}
      </div>
    </div>
  );
}

/* ---------- notice ---------- */

function Notice() {
  return (
    <div className="ml-[18px] mt-[34px] flex h-[90px] w-[1044px] items-center rounded-full bg-[#fcede4] pb-[2px] text-[38px] leading-none text-[#d9601f]">
      <svg viewBox="0 0 46 40" className="ml-[29px] h-[40px] w-[46px]" fill="#ea5504"><path d="M0 12h3.500v16H0zM9 12L36 3l5-3h5v40h-4l-5-4-10-2-2 4H17l-3-6-5-2z" /></svg>
      <div className="ml-[17px] flex h-[50px] w-[848px] items-center overflow-hidden [mask-image:linear-gradient(90deg,transparent,#000_60px,#000_780px,transparent_848px)]">
        <span className="-ml-[24px] -mt-[5px] w-[38px] shrink-0 overflow-hidden">看</span>
        <svg viewBox="0 0 40 20" className="ml-[5px] h-[20px] w-[40px] shrink-0" fill="none" stroke="#d9601f" strokeWidth="3"><path d="M1 2l16 8-16 8M22 2l16 8-16 8" /></svg>
        <div className="-mt-[5px] ml-[281px] flex shrink-0">
          <Fit className="w-[270px]">告别盲目筛选！</Fit><Fit className="ml-[2px] w-[116px]">交易日</Fit><Fit className="ml-[2px] w-[95px]">14:30</Fit><span>助力</span>
        </div>
      </div>
      <i className="ml-[15px] h-[36px] w-[2px] bg-[#cf7a4a]" />
      <svg viewBox="0 0 32 32" className="ml-[17px] h-[32px] w-[32px]" fill="none" stroke="#d9601f" strokeWidth="3"><path d="M1 1l30 30M31 1L1 31" /></svg>
    </div>
  );
}

function InfoTabs() {
  return (
    <nav className="mt-[16px] flex h-[106px] border-y-2 border-[#dcdcdc] pl-[27px] text-[43.500px] leading-none text-[#666]">
      {["股吧", "盘口", "资讯", "公告", "研报", "财务", "资料"].map((t, i) => (
        <div key={t} className={"relative flex w-[146.300px] items-center justify-center pb-[3px] " + (i === 0 ? "font-medium text-[#d9601f]" : "")}>
          {t}
          {i === 0 && <i className="absolute bottom-[7px] h-[6px] w-[60px] rounded-full bg-[#e8590c]" />}
        </div>
      ))}
    </nav>
  );
}

/* ---------- cards ---------- */

function Cards() {
  return (
    <div className="flex h-[153px] gap-[20px] overflow-hidden pl-[36px] pt-[12px]">
      <div className="relative h-[180px] w-[498px] shrink-0 overflow-hidden rounded-t-[24px] bg-gradient-to-b from-[#fdf2f0] to-[#fff9f8]">
        <svg viewBox="0 0 498 180" className="absolute inset-0 h-[180px] w-[498px]">
          <path d="M290 0h208v180H244V32h46z" fill="#fdf0ee" />
          <path d="M342 25h122v155H342zM278 82h64v98h-64z" fill="#fdf5f3" />
          <path d="M365 53h76v127h-76zM315 101h34v79h-34zM458 124h32v56h-32z" fill="#fce9e6" />
          <path d="M414 101v40l-14 2v37h-18v-58z" fill="#fdf1ef" />
        </svg>
        <div className="relative flex items-center pl-[24px] pt-[30px]">
          <svg viewBox="0 0 48 48" className="h-[48px] w-[48px]">
            <defs><linearGradient id="rd" x1="0" y1="0" x2="0" y2="1"><stop offset="0" stopColor="#d9504c" /><stop offset="1" stopColor="#eb9a95" /></linearGradient></defs>
            <circle cx="24" cy="24" r="24" fill="url(#rd)" />
            <path d="M9 20h7v16H9zM18 12h12v24H18zM32 24h7v12h-7z" fill="#fff" /><path d="M22 20l3-2v12" fill="none" stroke="#d9605c" strokeWidth="2.500" />
          </svg>
          <span className="-mt-[6px] ml-[13px] text-[41.500px] font-bold leading-none text-[#2e2e2e]">人气榜</span>
          <svg viewBox="0 0 14 30" className="ml-[15px] h-[26px] w-[13px]" fill="none" stroke="#aaa" strokeWidth="2.500"><path d="M1 2l11 13L1 28" /></svg>
        </div>
        <div className="relative mt-[24px] flex pl-[24px] text-[35px] leading-none text-[#666]">
          <Fit className="w-[240px]">A股市场排名第</Fit><Fit className="w-[87px] font-bold text-[#d9481c]">1239</Fit><span className="ml-[2px]">名</span>
        </div>
      </div>
      <div className="relative h-[180px] w-[498px] shrink-0 overflow-hidden rounded-t-[24px] bg-gradient-to-b from-[#fdf2f0] to-[#fff9f8]">
        <svg viewBox="0 0 497 180" className="absolute inset-0 h-[180px] w-[498px]">
          <path d="M255 0h242v180H275z" fill="#fdefed" />
          <path d="M302 22h64l20 60 22-60h60l29 30v128H310z" fill="#fdf4f2" />
          <path d="M322 42h30l4 70 28-70h32l-50 138h-38zM400 90c4-30 30-50 60-48 16 2 24 8 28 20l-20 14c-12-14-34-8-36 6 4 16 46 30 38 98h-50c20-40-22-50-20-90z" fill="#fce8e5" />
        </svg>
        <div className="relative flex items-center pl-[23px] pt-[30px]">
          <svg viewBox="0 0 48 48" className="h-[48px] w-[48px]">
            <circle cx="24" cy="24" r="24" fill="url(#rd)" />
            <text x="8" y="35" fontFamily="Roboto, sans-serif" fontSize="29" fontWeight="900" fontStyle="italic" fill="#fff" textLength="33" lengthAdjust="spacingAndGlyphs">VS</text>
          </svg>
          <span className="-mt-[6px] ml-[13px] text-[41.500px] font-bold leading-none text-[#2e2e2e]">多空看盘</span>
        </div>
        <div className="relative ml-[28px] mt-[22px] flex h-[90px] w-[443px] gap-[5px] overflow-hidden rounded-t-[46px] border-[5px] border-b-0 border-white/70 text-[35px] font-medium leading-none">
          <div className="flex w-[216px] bg-[#fbdcd9] text-[#d2502a]">
            <i className="ml-[12px] mt-[10px] h-[70px] w-[70px] rounded-full bg-white" /><span className="ml-[26px] mt-[9px]">看涨</span>
          </div>
          <div className="flex flex-1 bg-[#d6efdd] text-[#4caf6e]">
            <span className="ml-[37px] mt-[9px]">看跌</span><i className="ml-[20px] mt-[10px] h-[70px] w-[70px] rounded-full bg-white" />
          </div>
        </div>
      </div>
    </div>
  );
}

/* ---------- bottom bar ---------- */

function BottomBar() {
  const act = "flex flex-col items-center text-[32.500px] leading-none text-[#6b6b6b]";
  return (
    <footer className="flex h-[177px] border-t-2 border-[#dadada] bg-[#f7f8fb] leading-none">
      <div className="ml-[41px] w-[232px]">
        <Down className="ml-[86px] mt-[9px] block h-[7px] w-[21px] rotate-180 text-[#85858c]" />
        <div className="mt-[11px] pl-[27px]"><Fit className="w-[140px] text-[39px] text-[#109415]">3965.39</Fit></div>
        <div className="mt-[11px] flex items-center justify-between"><span className="text-[35px] text-[#6b6b6b]">上证</span><Fit className="w-[117px] text-[37px] text-[#109415]">−0.28%</Fit></div>
      </div>
      <div className="ml-[39px] mt-[17px] flex h-[99px] w-[177px] items-center justify-center rounded-[18px] bg-gradient-to-b from-[#f44f48] to-[#ea7670] pb-[4px] text-[44px] font-bold text-white">买</div>
      <div className="ml-[12px] mt-[17px] flex h-[99px] w-[176px] items-center justify-center rounded-[18px] bg-gradient-to-b from-[#3872f6] to-[#6a97fd] pb-[4px] text-[44px] font-bold text-white">卖</div>
      <div className={act + " ml-[48px] w-[78px] pt-[15px]"}><span className="text-[53px] font-medium text-[#2e2e2e]">撤</span><span className="mt-[15px]">撤单</span></div>
      <div className={act + " ml-[38px] w-[98px] pt-[12px]"}>
        <svg viewBox="0 0 54 58" className="h-[59px] w-[54px]" fill="none" stroke="#2e2e2e" strokeWidth="3.600" strokeLinejoin="round"><path d="M24 3q3-2 6 0l20 11q2 2 2 4v22q0 3-2 4L30 55q-3 2-6 0L4 44q-2-1-2-4V18q0-2 2-4z" /><circle cx="27" cy="29" r="9" /></svg>
        <span className="mt-[12px]">设自选</span>
      </div>
      <div className={act + " ml-[42px] w-[70px] pt-[12px]"}>
        <svg viewBox="0 0 48 59" className="h-[59px] w-[48px]" fill="#2e2e2e"><circle cx="6" cy="33" r="4.500" /><circle cx="24" cy="33" r="4.500" /><circle cx="42" cy="33" r="4.500" /></svg>
        <span className="mt-[12px]">更多</span>
      </div>
    </footer>
  );
}

export default function App() {
  return (
    <div className="h-[2400px] w-[1080px] overflow-hidden bg-[#fefefe] font-['Noto_Sans_CJK_SC',sans-serif]">
      <StatusBar />
      <Header />
      <Quote />
      <Periods />
      <Chips />
      <MaRow />
      <PriceChart />
      <VolumeRow />
      <VolumeChart />
      <Notice />
      <InfoTabs />
      <Cards />
      <BottomBar />
    </div>
  );
}
